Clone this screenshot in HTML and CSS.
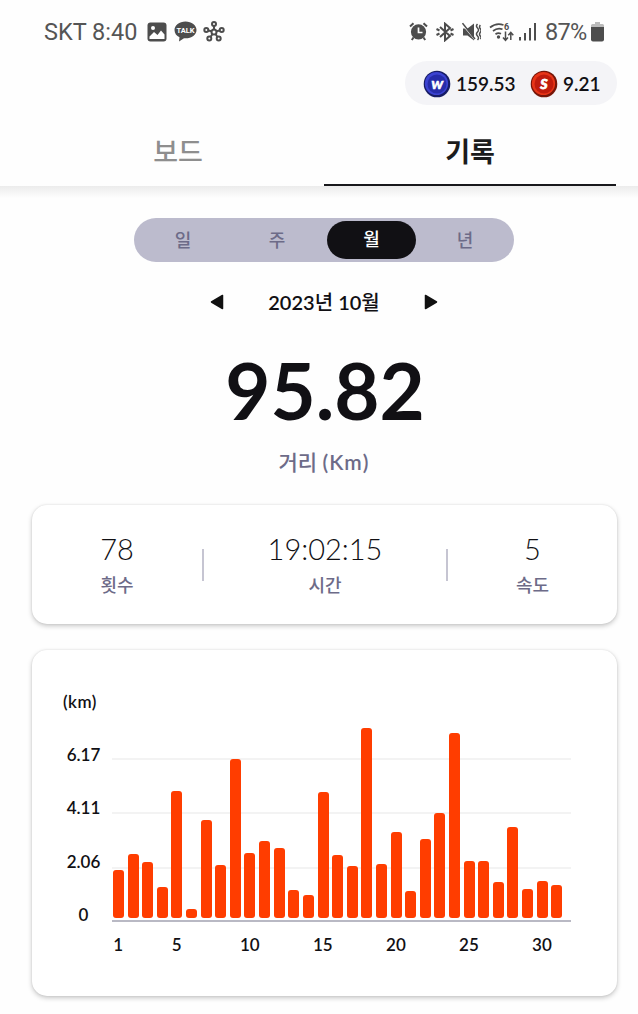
FILE: index.html
```html
<!DOCTYPE html>
<html lang="ko">
<head>
<meta charset="utf-8">
<title>기록</title>
<link rel="stylesheet" href="styles.css">
</head>
<body>
<div class="status">
  <span class="carrier">SKT 8:40</span>
  <svg class="ic-photo" width="20" height="20" viewBox="0 0 20 20"><rect x=".5" y=".5" width="19" height="19" rx="3" fill="#4d4d4d"/><circle cx="6" cy="6" r="2" fill="#fff"/><path d="M2.5 14.5L7 10l3.5 3L14 8.500l3.500 4v4.500h-15z" fill="#fff"/></svg>
  <svg class="ic-talk" width="23" height="21" viewBox="0 0 23 21"><path d="M11.500.5C5.300.5.500 4.200.500 9c0 3.300 2 6 5 7.300L5 20.500l5-3.200c7 .6 12.500-3.300 12.500-8.300C22.500 4.200 17.700.5 11.500.5z" fill="#4d4d4d"/><text x="11.500" y="11.700" text-anchor="middle" class="talk-text">TALK</text></svg>
  <svg class="ic-hub" width="22" height="21" viewBox="0 0 22 21" fill="none" stroke="#4d4d4d" stroke-width="2"><circle cx="11" cy="11" r="2.500"/><circle cx="11" cy="3" r="2"/><circle cx="3.300" cy="9" r="2"/><circle cx="18.700" cy="9" r="2"/><circle cx="6.300" cy="17.500" r="2"/><circle cx="15.700" cy="17.500" r="2"/><path d="M11 5v3.500M5.300 9.500l3.200.8M16.700 9.500l-3.200.8M7.500 16l2-3M14.500 16l-2-3"/></svg>
  <span class="spacer"></span>
  <svg class="ic-alarm" width="19" height="19" viewBox="0 0 19 19"><path d="M1 4.500L4.500 1.200M18 4.500l-3.500-3.300M4.500 15.500L2.800 18M14.500 15.500l1.700 2.500" stroke="#4d4d4d" stroke-width="2" fill="none"/><circle cx="9.500" cy="9.800" r="7.600" fill="#4d4d4d"/><path d="M9.500 5.500v5h4" stroke="#fff" stroke-width="1.700" fill="none"/></svg>
  <svg class="ic-bt" width="18" height="20" viewBox="0 0 18 20"><path d="M4 5l10 9-5 4.300V1.700L14 6 4 15M.5 7l3 1.500M.5 13l3-1.500M17.500 7l-3 1.500M17.500 13l-3-1.500" fill="none" stroke="#4d4d4d" stroke-width="2"/></svg>
  <svg class="ic-mute" width="19" height="20" viewBox="0 0 19 20"><path d="M1 6.500h4.500L12 1.500v17l-6.500-5H1z" fill="#4d4d4d"/><path d="M0 2l12.500 15" stroke="#fff" stroke-width="1.300"/><path d="M.5 1.200L13 17" stroke="#4d4d4d" stroke-width="1.500"/><path d="M15.500 2q-2 2 0 4t0 4 0 4 0 4M18.300 3q-1.500 2 0 3.700t0 3.600 0 3.600 0 3" stroke="#4d4d4d" stroke-width="1.500" fill="none"/></svg>
  <svg class="ic-wifi" width="26" height="20" viewBox="0 0 26 20"><path d="M1 5.500Q7.500.2 14.500 3M4 9q4.500-3.600 9.500-1.700M6.500 12.200q2.700-2 5.500-.5" fill="none" stroke="#4d4d4d" stroke-width="1.700"/><circle cx="9.500" cy="15" r="1.700" fill="#4d4d4d"/><text x="15" y="8" class="wifi-gen">6</text><path d="M16.500 9.500v8.500M14 15.500l2.500 2.800 2.500-2.800M21.800 18v-7M19.300 13.300l2.500-2.800 2.500 2.800" stroke="#4d4d4d" stroke-width="1.500" fill="none"/></svg>
  <svg class="ic-signal" width="18" height="18" viewBox="0 0 18 18" fill="#4d4d4d"><rect x="0" y="14" width="2" height="3.500"/><rect x="5" y="10" width="2" height="7.500"/><rect x="10" y="5" width="2" height="12.500"/><rect x="15" y="0" width="2" height="17.500"/></svg>
  <span class="charge">87%</span>
  <svg class="ic-battery" width="13" height="20" viewBox="0 0 13 20"><path d="M4 0h5v2h2.500q1.500 0 1.500 1.500V6H0V3.500Q0 2 1.500 2H4z" fill="#bbb"/><path d="M0 5h13v12.500q0 2-2 2H2q-2 0-2-2z" fill="#4d4d4d"/></svg>
</div>

<div class="wallet">
  <svg class="coin" width="28" height="28" viewBox="0 0 28 28"><circle cx="14" cy="14" r="13.300" fill="#171c65"/><circle cx="13.500" cy="13.500" r="11.600" fill="#3c43d1"/><circle cx="14" cy="14" r="9.500" fill="#262ca9"/><text x="14" y="18.500" text-anchor="middle" class="coin-w">W</text></svg>
  <span class="amount amount-w">159.53</span>
  <svg class="coin" width="28" height="28" viewBox="0 0 28 28"><circle cx="14" cy="14" r="13.300" fill="#761508"/><circle cx="13.500" cy="13.500" r="11.600" fill="#e83518"/><circle cx="14" cy="14" r="9.500" fill="#c01c0d"/><text x="14" y="19" text-anchor="middle" class="coin-s">S</text></svg>
  <span class="amount">9.21</span>
</div>

<div class="tabs">
  <div class="tab">보드</div>
  <div class="tab tab-on">기록</div>
</div>
<div class="tabs-shadow"></div>

<div class="period">
  <span>일</span><span>주</span><span class="period-on">월</span><span>년</span>
</div>

<div class="month">
  <svg width="14" height="16" viewBox="0 0 14 16"><path d="M12.500 1.500v13L1.500 8z" fill="#111" stroke="#111" stroke-width="1.500" stroke-linejoin="round"/></svg>
  <span class="month-name"><b>2023</b>년 <b>10</b>월</span>
  <svg width="14" height="16" viewBox="0 0 14 16"><path d="M1.500 1.500v13L12.500 8z" fill="#111" stroke="#111" stroke-width="1.500" stroke-linejoin="round"/></svg>
</div>

<div class="distance">95.82</div>
<div class="distance-label">거리 <span>(Km)</span></div>

<div class="card stats">
  <div class="stat"><div class="value">78</div><div class="label">횟수</div></div>
  <div class="rule"></div>
  <div class="stat stat-time"><div class="value">19:02:15</div><div class="label">시간</div></div>
  <div class="rule"></div>
  <div class="stat"><div class="value">5</div><div class="label">속도</div></div>
</div>

<div class="card chart">
  <div class="unit">(km)</div>
  <div class="chart-body">
    <div class="y-axis"><span>6.17</span><span>4.11</span><span>2.06</span><span>0</span></div>
    <div class="plot" id="plot"></div>
  </div>
  <div class="x-axis" id="days"></div>
</div>
<script src="chart.js"></script>
</body>
</html>
```
FILE: styles.css
```css
* { box-sizing: border-box; }
body {
  margin: 0;
  width: 638px;
  height: 1014px;
  overflow: hidden;
  background: #fefefe;
  color: #111014;
  font-family: Lato, "Noto Sans CJK KR", sans-serif;
}
svg { display: block; flex: none; }

/* status bar */
.status {
  display: flex;
  align-items: center;
  height: 61px;
  padding: 2px 34px 0 44px;
  color: #555;
  font: 400 23.5px/30px Roboto, sans-serif;
}
.carrier { width: 103px; white-space: nowrap; }
.spacer { flex: 1; }
.ic-talk { margin-left: 7px; }
.ic-hub { margin-left: 6px; }
.ic-bt { margin-left: 8px; }
.ic-mute { margin-left: 8px; }
.ic-wifi { margin-left: 8px; }
.ic-signal { margin-left: 4px; }
.charge { width: 46px; margin-left: 8px; letter-spacing: -0.7px; }
.talk-text { font: 700 7.5px Roboto, sans-serif; fill: #fff; }
.wifi-gen { font: 700 9px Roboto, sans-serif; fill: #4d4d4d; }

/* balance pill */
.wallet {
  display: flex;
  align-items: center;
  width: 212px;
  height: 44px;
  margin-left: 405px;
  padding: 1px 0 0 18px;
  border-radius: 22px;
  background: #f4f4f7;
}
.coin-w { font: italic 900 12px Lato, sans-serif; fill: #fff; stroke: #fff; stroke-width: .6px; }
.coin-s { font: italic 900 14px Lato, sans-serif; fill: #fff; stroke: #fff; stroke-width: .8px; }
.amount { margin-left: 5px; font: 600 19px/28px Lato, sans-serif; }
.amount-w { width: 74px; }

/* tabs */
.tabs {
  display: flex;
  height: 81px;
  padding: 0 22px 0 32px;
}
.tab {
  flex: 1;
  padding-top: 27px;
  text-align: center;
  font-size: 27px;
  line-height: 40px;
  font-weight: 500;
  color: #8e8e8e;
}
.tab-on { color: #1c1c1c; font-weight: 700; border-bottom: 2px solid #18181c; }
.tabs-shadow { height: 12px; background: linear-gradient(#ececec, #fefefe); }

/* period switch */
.period {
  display: grid;
  grid-template-columns: repeat(4, 94px);
  align-items: center;
  width: 380px;
  height: 44px;
  margin: 20px 0 0 134px;
  padding: 0 2px;
  border-radius: 22px;
  background: #bcbbcd;
  color: #6d6b88;
  font-size: 18px;
  line-height: 36px;
  font-weight: 500;
  text-align: center;
}
.period-on {
  height: 38px;
  margin: 0 2px 0 3px;
  border-radius: 19px;
  background: #111014;
  color: #fff;
}

/* month picker */
.month {
  display: flex;
  align-items: center;
  justify-content: space-between;
  width: 228px;
  height: 40px;
  margin: 20px 0 0 210px;
}
.month-name {
  font-size: 20px;
  line-height: 30px;
  font-weight: 500;
  white-space: nowrap;
}
.month-name b { font-weight: 600; }

.distance {
  width: 650px;
  margin-top: 20px;
  text-align: center;
  font-size: 78px;
  line-height: 96px;
  font-weight: 700;
}
.distance-label {
  width: 648px;
  margin-top: 8px;
  text-align: center;
  font-size: 21px;
  line-height: 32px;
  font-weight: 500;
  color: #6d6b88;
}
.distance-label span { font-weight: 600; letter-spacing: 1px; }

/* cards */
.card {
  width: 585px;
  margin-left: 32px;
  border-radius: 15px;
  background: #fff;
  box-shadow: 0 2px 5px rgba(0, 0, 0, .22), 0 0 2px rgba(0, 0, 0, .1);
}
.stats {
  display: grid;
  grid-template-columns: 170px 2px 242px 2px 169px;
  align-items: center;
  height: 119px;
  margin-top: 27px;
  text-align: center;
}
.value { font-size: 29px; line-height: 36px; font-weight: 300; }
.label { font-size: 18px; line-height: 28px; margin-top: 4px; font-weight: 500; color: #6d6b88; }
.rule { height: 32px; background: #c6c5d2; }

/* chart */
.chart { height: 346px; margin-top: 26px; padding: 39px 0 0 31px; }
.unit { height: 26px; font-size: 17px; line-height: 26px; font-weight: 600; letter-spacing: .5px; }
.chart-body { display: flex; height: 207px; }
.y-axis {
  display: grid;
  grid-template-rows: repeat(4, 53.3px);
  width: 41px;
  margin-right: 8px;
  padding-top: 27px;
  text-align: center;
  font-size: 17px;
  line-height: 26px;
  font-weight: 600;
}
.plot {
  display: flex;
  align-items: flex-end;
  gap: 3.62px;
  width: 459px;
  padding: 0 0 2px 1px;
  border-bottom: 2px solid #b9b9c4;
  background:
    linear-gradient(#f3f3f3, #f3f3f3) 0 43px / 100% 2px no-repeat,
    linear-gradient(#f3f3f3, #f3f3f3) 0 97px / 100% 2px no-repeat,
    linear-gradient(#f3f3f3, #f3f3f3) 0 152px / 100% 2px no-repeat;
}
.bar { flex: none; width: 11px; border-radius: 3px; background: #ff3d00; }
.x-axis {
  display: grid;
  grid-template-columns: repeat(31, 14.62px);
  margin: 10px 0 0 48px;
  font-size: 17px;
  line-height: 26px;
  font-weight: 600;
}
.x-axis span { display: flex; justify-content: center; }
```
FILE: chart.js
```js
const heights = [48.3, 64, 55.7, 31, 126.7, 9, 98, 53.5, 159, 64.7, 76.7, 70, 28.3, 23.3, 126.4, 63,
  52, 190.5, 54, 85.7, 27, 78.7, 105.5, 184.7, 57, 56.7, 36, 91.3, 29.3, 37.3, 33.3];
const plot = document.getElementById('plot');
const days = document.getElementById('days');
heights.forEach((height, index) => {
  const bar = document.createElement('div');
  bar.className = 'bar';
  bar.style.height = height + 'px';
  plot.append(bar);
  const day = document.createElement('span');
  const number = index + 1;
  day.textContent = number === 1 || number % 5 === 0 ? number : '';
  days.append(day);
});
```
